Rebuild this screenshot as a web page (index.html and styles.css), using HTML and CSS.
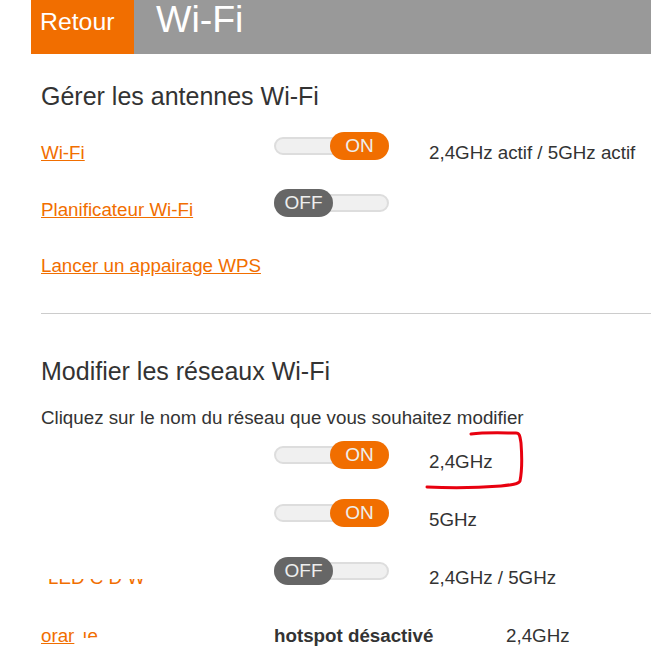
FILE: index.html
```html
<!DOCTYPE html>
<html lang="fr">
<head>
    <meta charset="UTF-8">
    <meta name="viewport" content="width=device-width, initial-scale=1.0">
    <title>Wi-Fi</title>
    <link rel="stylesheet" href="styles.css">
</head>
<body>
    <div class="page">
        <div class="topBar">
            <a class="back">Retour</a>
            <h1>Wi-Fi</h1>
        </div>

        <div class="section first">
            <h2>Gérer les antennes Wi-Fi</h2>
            <div class="row">
                <a class="link">Wi-Fi</a>
                <div class="switch on"><span class="knob">ON</span></div>
                <p>2,4GHz actif / 5GHz actif</p>
            </div>
            <div class="row">
                <a class="link">Planificateur Wi-Fi</a>
                <div class="switch off"><span class="knob">OFF</span></div>
            </div>
            <div class="row">
                <a class="link">Lancer un appairage WPS</a>
            </div>
        </div>

        <hr>

        <div class="section">
            <h2>Modifier les réseaux Wi-Fi</h2>
            <p class="hint">Cliquez sur le nom du réseau que vous souhaitez modifier</p>
            <div class="row net">
                <span></span>
                <div class="switch on"><span class="knob">ON</span></div>
                <p>2,4GHz</p>
            </div>
            <div class="row net">
                <span></span>
                <div class="switch on"><span class="knob">ON</span></div>
                <p>5GHz</p>
            </div>
            <div class="row net">
                <span class="hidden"><span class="scrap">LED C D W</span></span>
                <div class="switch off"><span class="knob">OFF</span></div>
                <p>2,4GHz / 5GHz</p>
            </div>
            <div class="row net last">
                <span class="lastName"><a class="link">orar</a><span class="bit">ıe</span></span>
                <b>hotspot désactivé</b>
                <p>2,4GHz</p>
            </div>
        </div>

        <!-- red marker around the 2,4GHz row -->
        <svg class="scribble" width="100" height="60" viewBox="0 0 100 60">
            <path d="M45 3 C60 1 80 2 90 2 C94 2 94 6 95 12 C96 25 96 40 94 50 C93 53 85 54 75 55 C50 57 20 57 1 56" fill="none" stroke="#e8000f" stroke-width="3" stroke-linecap="round"/>
        </svg>
    </div>
</body>
</html>
```

FILE: styles.css
```css
body{
    margin: 0;
    font-family: "Liberation Sans", Arial, sans-serif;
    color: #333;
    background: #fff;
}
.page{
    position: relative;
    margin-left: 31px;
    height: 660px;
    overflow: hidden;
}
.topBar{
    display: flex;
    height: 54px;
    background-color: #999;
    color: #fff;
}
.back{
    width: 94px;
    padding-left: 9px;
    background-color: #f16e00;
    font-size: 24.800px;
    line-height: 43px;
}
h1{
    margin: 0 0 0 22px;
    font-size: 37.500px;
    font-weight: 400;
    line-height: 38px;
}
.section{
    margin-left: 10px;
}
.first{
    padding-top: 28px;
}
h2{
    margin: 0;
    font-size: 25px;
    font-weight: 400;
    line-height: 28px;
}
.first h2{
    margin-bottom: 15px;
}
.row{
    display: grid;
    grid-template-columns: 233px 155px 1fr;
    align-items: center;
    height: 56.500px;
    font-size: 18.750px;
}
.net{
    height: 58px;
}
.row p{
    margin: 0;
}
.link{
    color: #f16e00;
    text-decoration: underline;
}
.switch{
    position: relative;
    width: 115px;
    height: 18px;
    margin-bottom: 14px;
    border: 2px solid #ddd;
    border-radius: 10px;
    box-sizing: border-box;
    background-color: #f0f0f0;
}
.knob{
    position: absolute;
    top: -7px;
    width: 59px;
    height: 28px;
    border-radius: 14px;
    color: #eee;
    font-size: 19px;
    line-height: 28px;
    text-align: center;
}
.on .knob{
    right: -2px;
    background-color: #f16e00;
}
.off .knob{
    left: -2px;
    background-color: #666;
}
hr{
    margin: 18.500px 0 43px 10px;
    border: 0;
    border-top: 1px solid #ccc;
}
.hint{
    margin: 22px 0 4px;
    font-size: 18.750px;
    line-height: 22px;
}
.hidden{
    height: 5px;
    margin-top: 6px;
    overflow: hidden;
}
.scrap{
    display: block;
    margin-top: -12px;
    padding-left: 7px;
    color: #f16e00;
    line-height: 22px;
}
.lastName{
    display: flex;
}
.bit{
    height: 13px;
    margin-left: 8px;
    overflow: hidden;
    color: #f16e00;
    line-height: 21px;
}
.last{
    grid-template-columns: 233px 232px 1fr;
}
.scribble{
    position: absolute;
    left: 395px;
    top: 431px;
    overflow: visible;
}
```
